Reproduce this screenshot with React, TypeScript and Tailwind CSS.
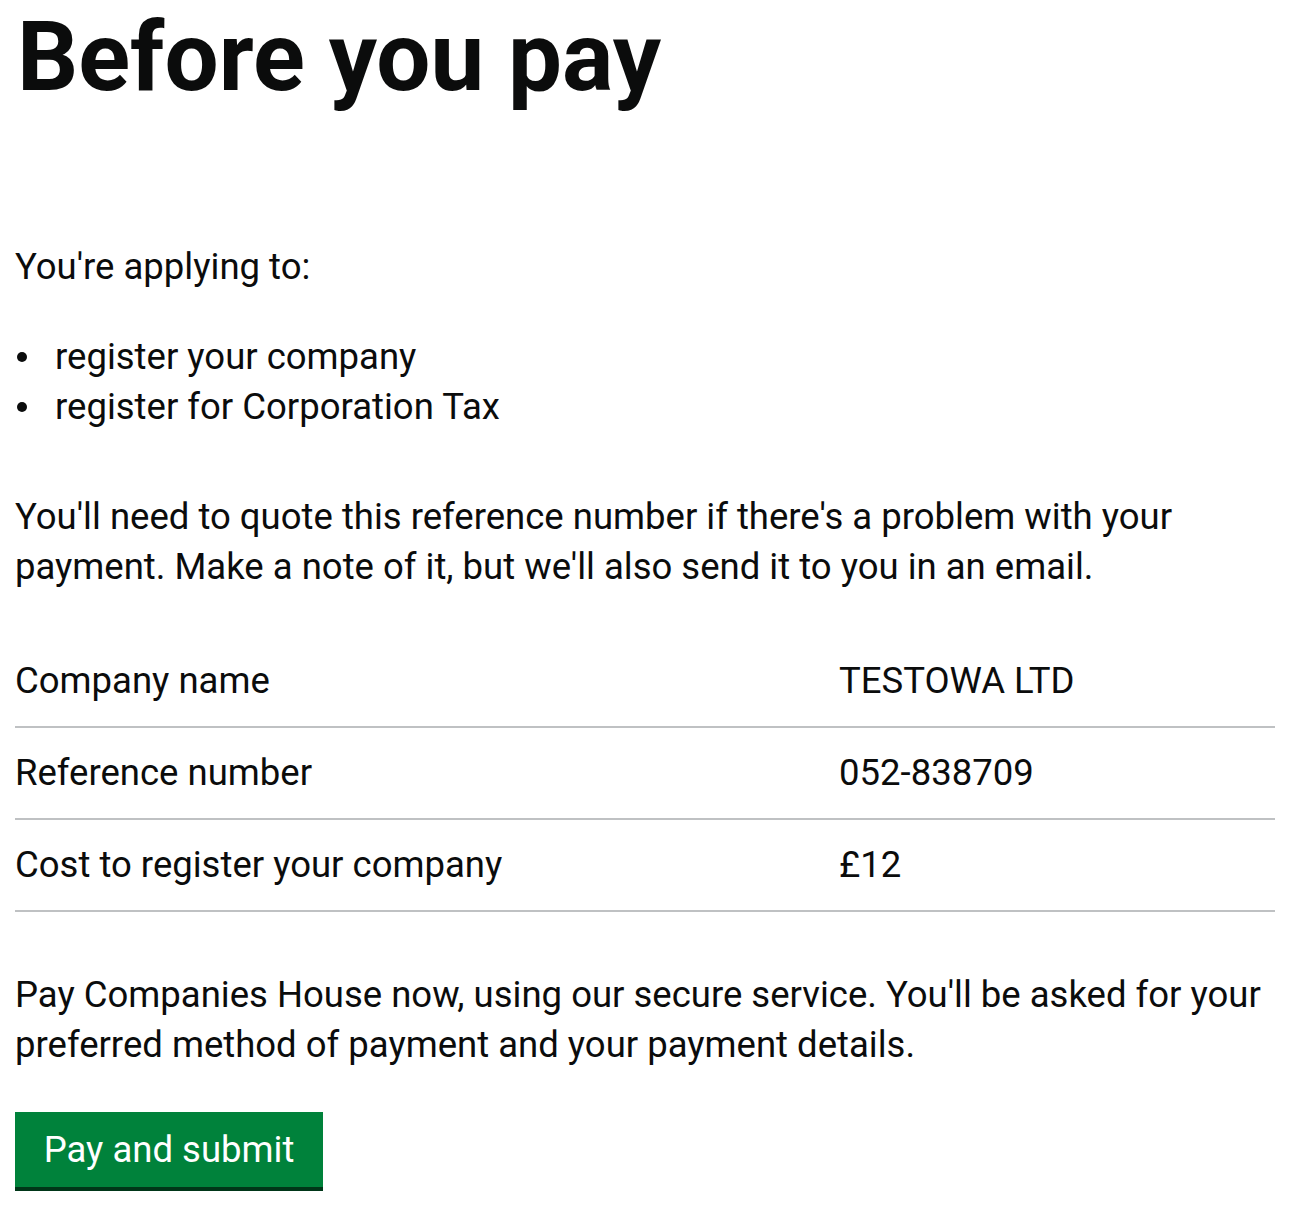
const rows = [
  { key: "Company name", value: "TESTOWA LTD" },
  { key: "Reference number", value: "052-838709" },
  { key: "Cost to register your company", value: "£12" },
];

const items = ["register your company", "register for Corporation Tax"];

export default function App() {
  return (
    <div className="min-h-[1213px] bg-white pl-[15px] pr-[21px] pt-[7px] text-[#0b0c0c] [font-family:Roboto,Arial,sans-serif]">
      <h1 className="ml-[2px] text-[96px] font-bold leading-[100px]">Before you pay</h1>

      <p className="mt-[135px] text-[36.5px] leading-[50px]">You're applying to:</p>

      <ul className="mt-[40px] text-[36.5px] leading-[50px]">
        {items.map((item) => (
          <li key={item} className="flex items-center">
            <span className="ml-[2px] mr-[28px] h-[10px] w-[10px] rounded-full bg-[#0b0c0c]" />
            <span>{item}</span>
          </li>
        ))}
      </ul>

      <p className="mt-[60px] text-[36.5px] leading-[50px]">
        You'll need to quote this reference number if there's a problem with your payment. Make a note of it, but we'll also send it to you in an email.
      </p>

      <div className="mt-[44px]">
        {rows.map((row) => (
          <div key={row.key} className="grid grid-cols-[824px_1fr] border-b-2 border-[#bfc1c3] py-[20px] text-[36.5px] leading-[50px]">
            <div>{row.key}</div>
            <div>{row.value}</div>
          </div>
        ))}
      </div>

      <p className="mt-[58px] text-[36.5px] leading-[50px]">
        Pay Companies House now, using our secure service. You'll be asked for your preferred method of payment and your payment details.
      </p>

      <button className="mt-[42px] flex h-[75px] w-[308px] items-center justify-center bg-[#00823b] text-[36.5px] leading-[50px] text-white shadow-[0_4px_0_#003618]">
        Pay and submit
      </button>
    </div>
  );
}
